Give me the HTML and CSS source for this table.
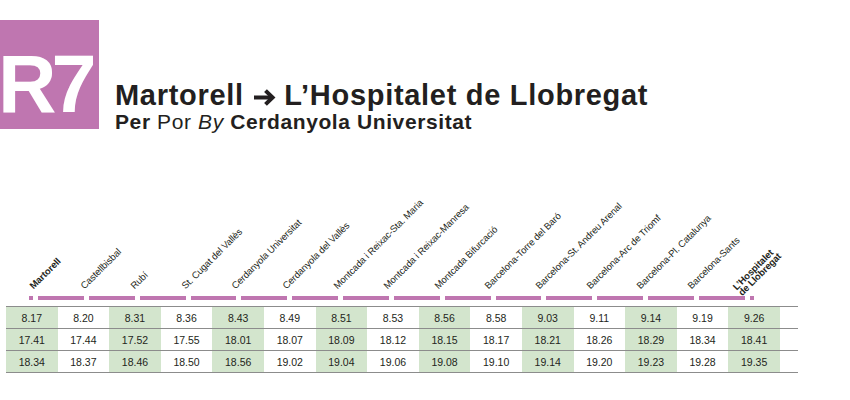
FILE: index.html
```html
<!DOCTYPE html>
<html lang="ca">
<head>
<meta charset="utf-8">
<title>R7 Martorell - L'Hospitalet de Llobregat</title>
<link rel="stylesheet" href="styles.css">
</head>
<body>
<header class="head">
  <div class="badge">R7</div>
  <div class="titles">
    <h1 class="title">Martorell <svg class="arrow" width="23" height="17" viewBox="0 0 23 17" aria-hidden="true"><path d="M1 8.5H19" stroke="#231f20" stroke-width="4" fill="none"/><path d="M12.5 1.6L19.6 8.5L12.5 15.4" stroke="#231f20" stroke-width="4" fill="none" stroke-linejoin="miter"/></svg> L’Hospitalet de Llobregat</h1>
    <p class="sub"><b>Per</b> Por <i>By</i> <b>Cerdanyola Universitat</b></p>
  </div>
</header>

<section class="timetable">
  <div class="stations">
    <div class="st"><span class="bold">Martorell</span></div>
    <div class="st"><span>Castellbisbal</span></div>
    <div class="st"><span>Rubí</span></div>
    <div class="st"><span>St. Cugat del Vallès</span></div>
    <div class="st"><span>Cerdanyola Universitat</span></div>
    <div class="st"><span>Cerdanyola del Vallès</span></div>
    <div class="st"><span>Montcada i Reixac-Sta. Maria</span></div>
    <div class="st"><span>Montcada i Reixac-Manresa</span></div>
    <div class="st"><span>Montcada Bifurcació</span></div>
    <div class="st"><span>Barcelona-Torre del Baró</span></div>
    <div class="st"><span>Barcelona-St. Andreu Arenal</span></div>
    <div class="st"><span>Barcelona-Arc de Triomf</span></div>
    <div class="st"><span>Barcelona-Pl. Catalunya</span></div>
    <div class="st"><span>Barcelona-Sants</span></div>
    <div class="st"><span class="bold two">L’Hospitalet<br>de Llobregat</span></div>
  </div>

  <div class="line">
    <i class="stub"></i>
    <i class="dash"></i><i class="dash"></i><i class="dash"></i><i class="dash"></i><i class="dash"></i><i class="dash"></i><i class="dash"></i>
    <i class="dash"></i><i class="dash"></i><i class="dash"></i><i class="dash"></i><i class="dash"></i><i class="dash"></i><i class="dash"></i>
    <i class="stub"></i>
  </div>

  <table class="times">
    <tr>
      <td>8.17</td><td>8.20</td><td>8.31</td><td>8.36</td><td>8.43</td><td>8.49</td><td>8.51</td><td>8.53</td><td>8.56</td><td>8.58</td><td>9.03</td><td>9.11</td><td>9.14</td><td>9.19</td><td>9.26</td><td class="pad"></td>
    </tr>
    <tr>
      <td>17.41</td><td>17.44</td><td>17.52</td><td>17.55</td><td>18.01</td><td>18.07</td><td>18.09</td><td>18.12</td><td>18.15</td><td>18.17</td><td>18.21</td><td>18.26</td><td>18.29</td><td>18.34</td><td>18.41</td><td class="pad"></td>
    </tr>
    <tr>
      <td>18.34</td><td>18.37</td><td>18.46</td><td>18.50</td><td>18.56</td><td>19.02</td><td>19.04</td><td>19.06</td><td>19.08</td><td>19.10</td><td>19.14</td><td>19.20</td><td>19.23</td><td>19.28</td><td>19.35</td><td class="pad"></td>
    </tr>
  </table>
</section>
</body>
</html>
```

FILE: styles.css
```css
* { box-sizing: border-box; }

body {
  margin: 0;
  background: #ffffff;
  color: #231f20;
  font-family: "Liberation Sans", Arial, sans-serif;
}

.head {
  display: flex;
  align-items: flex-end;
  padding-top: 20px;
}

.badge {
  width: 99px;
  height: 109px;
  flex: none;
  background: #bf76b0;
  color: #ffffff;
  font-weight: 700;
  font-size: 81px;
  line-height: 1;
  letter-spacing: -5px;
  padding: 24px 0 0 0;
  text-indent: -2px;
  overflow: hidden;
  white-space: nowrap;
}

.titles {
  margin-left: 16px;
}

.title {
  margin: 0;
  font-size: 29px;
  font-weight: 700;
  line-height: 30px;
  letter-spacing: 0.7px;
}

.arrow {
  vertical-align: -1px;
}

.sub {
  margin: 0 0 -5px 0;
  font-size: 21px;
  line-height: 24px;
  letter-spacing: 0.6px;
}

.sub b { font-weight: 700; }

.timetable {
  margin-top: 60px;
}

.stations {
  display: flex;
  margin-left: 35px;
  height: 102px;
  align-items: flex-end;
}

.st {
  width: 50.6px;
  flex: none;
  height: 10px;
}

.st span {
  display: block;
  white-space: nowrap;
  font-size: 9.5px;
  line-height: 10px;
  transform-origin: 0 100%;
  transform: rotate(-45deg);
  letter-spacing: -0.1px;
}

.st .bold { font-weight: 700; }

.st .two {
  line-height: 8px;
}

.line {
  display: flex;
  gap: 5px;
  margin: 5px 0 0 29px;
  height: 4px;
}

.line i {
  display: block;
  height: 4px;
  background: #bf76b0;
  flex: none;
}

.stub { width: 4px; }
.dash { width: 45.85px; }

.times {
  margin: 6px 0 0 6px;
  border-collapse: collapse;
  table-layout: fixed;
  width: 792px;
  font-family: "Liberation Sans Narrow", "Liberation Sans", Arial, sans-serif;
  font-size: 10.5px;
}

.times td {
  width: 51.6px;
  height: 22px;
  padding: 0;
  text-align: center;
  border-top: 1px solid #8c8c8c;
  border-bottom: 1px solid #8c8c8c;
}

.times td:nth-child(odd) { background: #d3e5cd; }
.times td.pad { width: 18px; background: #ffffff; }
```
